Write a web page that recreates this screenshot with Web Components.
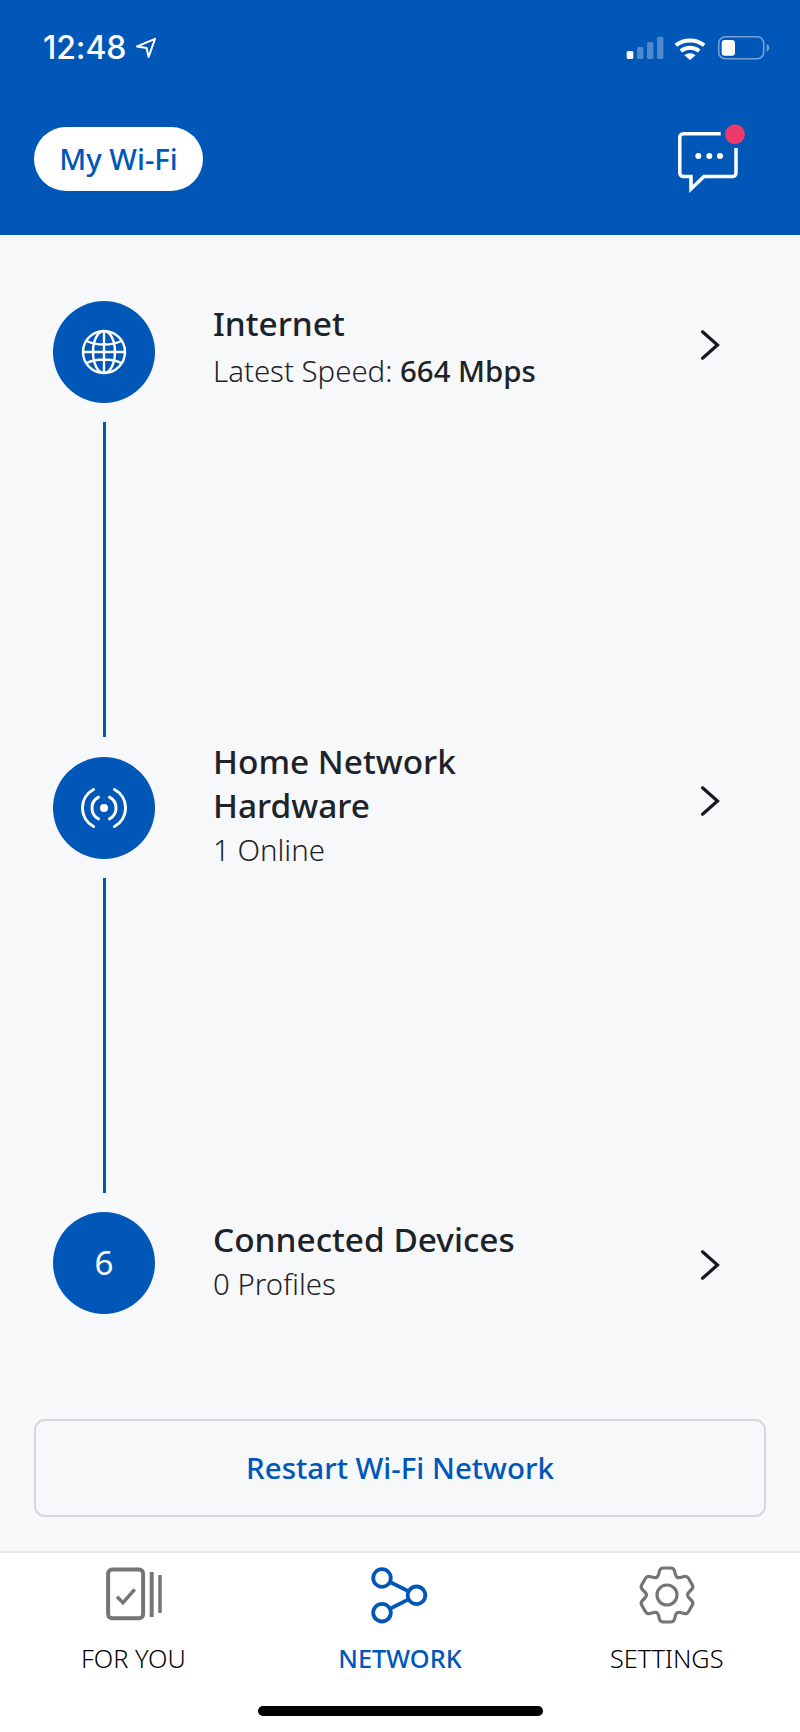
<!DOCTYPE html>
<html lang="en"><head><meta charset="utf-8"><title>My Wi-Fi</title>
<style>
html,body{margin:0;padding:0;width:800px;height:1732px;overflow:hidden;background:#f7f8fa;font-family:"Noto Sans",sans-serif;}
wifi-app{width:800px;height:1732px}
</style></head><body>
<wifi-app></wifi-app>
<script>
function def(name, html, init){
  customElements.define(name, class extends HTMLElement{
    connectedCallback(){
      if(this.shadowRoot) return;
      const r=this.attachShadow({mode:'open'});
      r.innerHTML=typeof html==='function'?html(this):html;
      if(init) init(this,r);
    }
  });
}
const BLUE='#0057b8';
def('status-bar',`<style>
:host{display:flex;align-items:center;justify-content:space-between;height:26px;padding:35px 30px 0 43px;color:#fff}
.l{display:flex;align-items:center;gap:9px}
.t{font:500 32px/26px Inter,"Noto Sans",sans-serif;letter-spacing:-.1px}
.r{display:flex;align-items:center}
svg{display:block}
</style>
<div class="l"><span class="t">12:48</span>
<svg width="22" height="22" viewBox="0 0 22 22"><path d="M2 9.500 20 1.800 13.600 20 11.600 11 Z" fill="none" stroke="#fff" stroke-width="2" stroke-linejoin="round"/></svg></div>
<div class="r">
<svg width="144" height="26" viewBox="0 0 144 26">
<g fill="#fff"><rect x="0.700" y="16" width="6.600" height="8" rx="1.500"/>
<g opacity=".3"><rect x="11" y="12" width="6.400" height="12" rx="1.500"/><rect x="21" y="7" width="6.400" height="17" rx="1.500"/><rect x="31" y="1.700" width="6.400" height="22.300" rx="1.500"/></g></g>
<g fill="none" stroke="#fff" stroke-width="4"><path d="M49.800 10.300a23 23 0 0 1 28.400 0"/><path d="M54.800 16a15 15 0 0 1 18.400 0"/></g>
<path d="M58.400 20.200a9 9 0 0 1 11.200 0L64 25Z" fill="#fff"/>
<rect x="92.700" y="1.800" width="45" height="22" rx="6.500" fill="none" stroke="#fff" stroke-opacity=".45" stroke-width="1.600"/>
<rect x="95.700" y="5" width="13.300" height="15.700" rx="3" fill="#fff"/>
<path d="M140.700 9v8a4.500 4.500 0 0 0 2.600-4 4.500 4.500 0 0 0-2.600-4Z" fill="#fff" fill-opacity=".45"/>
</svg></div>`);
def('wifi-pill',`<style>
:host{display:flex;align-items:center;justify-content:center;width:169px;height:64px;border-radius:32px;background:#fff;color:${BLUE};font:500 29.400px/34px "Noto Sans",sans-serif}
</style><slot></slot>`);
def('chat-icon',`<style>:host{display:block;width:72px;height:70px;margin-top:-3px}svg{display:block}</style>
<svg width="72" height="70" viewBox="0 0 72 70">
<path d="M45.700 9.700H8.300a3.500 3.500 0 0 0-3.500 3.500V49a3.500 3.500 0 0 0 3.500 3.500H16V65L29 52.500H57.500a3.500 3.500 0 0 0 3.500-3.500V24" fill="none" stroke="#fff" stroke-width="3.500" stroke-linejoin="miter"/>
<g fill="#fff"><circle cx="23.300" cy="32" r="3"/><circle cx="34.300" cy="32" r="3"/><circle cx="45" cy="32" r="3"/></g>
<circle cx="60" cy="10.300" r="10" fill="#ee3a68"/></svg>`);
def('app-header',`<style>
:host{display:block;background:${BLUE};height:235px;box-sizing:border-box}
.b{display:flex;justify-content:space-between;align-items:flex-start;padding:66px 53px 0 34px}
</style><status-bar></status-bar><div class="b"><wifi-pill>My Wi-Fi</wifi-pill><chat-icon></chat-icon></div>`);
def('net-node',`<style>
:host{display:flex;align-items:center;justify-content:center;width:102px;height:102px;border-radius:50%;background:${BLUE};color:#fff;font:400 33px/36px "Noto Sans",sans-serif;flex:none}
</style><slot></slot>`);
def('net-step',(h)=>`<style>
:host{display:flex;align-items:center;height:102px;padding-left:53px;color:#1d2329}
.txt{flex:1;margin-left:58px;transform:translateY(var(--shift,0));min-width:0}
.ti{font:500 33.400px/44px "Noto Sans",sans-serif;width:330px;margin-bottom:var(--gap,0)}
.su{font:300 29.400px/46px "Noto Sans",sans-serif;white-space:nowrap}
::slotted(b){font-weight:500}
svg{display:block;margin-right:80px;transform:translateY(var(--cshift,0))}
</style><net-node><slot name="icon"></slot></net-node>
<div class="txt"><div class="ti">${h.getAttribute('label')}</div><div class="su"><slot></slot></div></div>
<svg width="20" height="32" viewBox="0 0 20 32"><path d="M2.500 2.700l15 13.300-15 13.300" fill="none" stroke="#15191d" stroke-width="3.200" stroke-linecap="round"/></svg>`);
def('net-line',`<style>:host{display:block;width:3px;height:315px;background:${BLUE};margin:19px 0 var(--after,20px) 103px}</style>`);
def('restart-button',`<style>
:host{display:flex;align-items:center;justify-content:center;box-sizing:border-box;height:98px;margin:105px 34px 0;border:2px solid #d5d7da;border-radius:11px;color:${BLUE};font:500 29.500px/34px "Noto Sans",sans-serif}
</style><slot></slot>`);
def('tab-item',(h)=>`<style>
:host{flex:1;display:flex;flex-direction:column;align-items:center;color:${h.hasAttribute('active')?BLUE:'#000'};font:${h.hasAttribute('active')?500:300} 25.300px/30px "Noto Sans",sans-serif}
.i{height:60px;width:80px;display:flex;justify-content:center}
.l{margin-top:18px}
</style><div class="i"><slot name="icon"></slot></div><div class="l"><slot></slot></div>`);
def('tab-bar',`<style>
:host{display:block;background:#fff;border-top:2px solid #e6e7e9;box-sizing:border-box;height:181px;margin-top:34px;padding-top:12px}
.t{display:flex}
.h{width:285px;height:10px;border-radius:5px;background:#000;margin:33px auto 0;}
</style><div class="t"><slot></slot></div><div class="h"></div>`);
function gearPath(cx,cy){
  const v=[];
  for(let k=0;k<6;k++){
    const a=-90+60*k;
    [[20.5,-26],[27.8,-14],[27.8,14],[20.5,26]].forEach(([r,o])=>{
      const t=(a+o)*Math.PI/180;
      v.push([cx+r*Math.cos(t),cy+r*Math.sin(t)]);
    });
  }
  const lerp=(p,q,d)=>{const L=Math.hypot(q[0]-p[0],q[1]-p[1]),f=Math.min(.5,d/L);return [p[0]+(q[0]-p[0])*f,p[1]+(q[1]-p[1])*f];};
  const f=p=>p[0].toFixed(1)+' '+p[1].toFixed(1);
  let d='';
  v.forEach((p,i)=>{
    const prev=v[(i+v.length-1)%v.length],next=v[(i+1)%v.length];
    const s=lerp(p,prev,3),e=lerp(p,next,3);
    d+=(i?'L':'M')+f(s)+'Q'+f(p)+' '+f(e);
  });
  return d+'Z';
}
def('wifi-app',`<style>
:host{display:block;width:800px;height:1732px}
main{padding-top:66px}
svg{display:block}
</style>
<app-header></app-header>
<main>
<net-step label="Internet" style="--shift:-5px;--cshift:-7px;--gap:3px">
<svg slot="icon" width="48" height="48" viewBox="0 0 48 48" fill="none" stroke="#fff" stroke-width="2.400"><circle cx="24" cy="24" r="21"/><ellipse cx="24" cy="24" rx="11" ry="21"/><path d="M24 3v42M3 24h42M6.500 13c5 2.400 11 3.500 17.500 3.500s12.500-1.100 17.500-3.500M6.500 35c5-2.400 11-3.500 17.500-3.500s12.500 1.100 17.500 3.500"/></svg>
Latest Speed: <b>664 Mbps</b></net-step>
<net-line></net-line>
<net-step label="Home Network Hardware" style="--shift:-2px;--cshift:-7px">
<svg slot="icon" width="48" height="48" viewBox="0 0 48 48" fill="none" stroke="#fff" stroke-width="3" stroke-linecap="round"><circle cx="24" cy="24" r="4" fill="#fff" stroke="none"/><path d="M18.500 13.200a12.200 12.200 0 0 0 0 21.600M29.500 13.200a12.200 12.200 0 0 1 0 21.600M13.500 5.500a21 21 0 0 0 0 37M34.500 5.500a21 21 0 0 1 0 37"/></svg>
1 Online</net-step>
<net-line style="--after:19px"></net-line>
<net-step label="Connected Devices" style="--shift:-1px;--cshift:2px"><span slot="icon">6</span>0 Profiles</net-step>
<restart-button>Restart Wi-Fi Network</restart-button>
</main>
<tab-bar>
<tab-item><svg slot="icon" width="60" height="60" viewBox="0 0 60 60" fill="none" stroke="#757575" stroke-width="4"><rect x="5.100" y="4.500" width="35" height="48.700" rx="4"/><path d="M14 31.700l6 6 11.700-13.400" stroke-width="3.500"/><path d="M48.700 7v45"/><path d="M57 10v38" stroke-width="3.500"/></svg>FOR YOU</tab-item>
<tab-item active><svg slot="icon" width="60" height="60" viewBox="0 0 60 60" fill="none" stroke="${BLUE}" stroke-width="3.800"><circle cx="12" cy="13" r="8.800"/><circle cx="46.500" cy="30.300" r="8.800"/><circle cx="12" cy="47.700" r="8.800"/><path d="M20 17l18.500 9.300M20 43.700l18.500-9.300"/></svg>NETWORK</tab-item>
<tab-item><svg slot="icon" width="60" height="60" viewBox="0 0 60 60" fill="none" stroke="#757575" stroke-width="3.200" stroke-linejoin="round"><path d="${gearPath(30,30)}"/><circle cx="30" cy="30" r="10"/></svg>SETTINGS</tab-item>
</tab-bar>`);
</script></body></html>
